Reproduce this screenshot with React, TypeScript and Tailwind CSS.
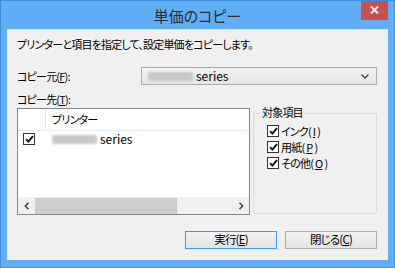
import type { ReactNode } from "react";

const font = {
    fontFamily: '"Noto Sans CJK JP", "Noto Sans", sans-serif',
    fontFeatureSettings: '"palt"',
};

function Check({ checked = true }: { checked?: boolean }) {
    return (
        <span className="inline-flex h-[12px] w-[12px] shrink-0 items-center justify-center border border-[#333333] bg-white">
            {checked && (
                <svg width="9" height="8" viewBox="0 0 9 8">
                    <path d="M1 4.2 L3.4 6.6 L8 1.2" fill="none" stroke="#111" strokeWidth="1.9" />
                </svg>
            )}
        </span>
    );
}

function Btn({ children, def }: { children: ReactNode; def?: boolean }) {
    return (
        <button
            className={
                "flex h-[18px] w-[92px] items-center justify-center border bg-gradient-to-b from-[#f2f2f2] to-[#e3e3e3] text-[11.5px] leading-none text-black " +
                (def ? "border-[#3c9bf0]" : "border-[#acacac]")
            }
        >
            {children}
        </button>
    );
}

function Blur({ w }: { w: number }) {
    return (
        <span
            className="inline-block h-[9px] rounded-[2px] bg-[#c8c8c8] blur-[1.2px]"
            style={{ width: w }}
        />
    );
}

export default function App() {
    return (
        <div className="h-[268px] w-[395px] overflow-hidden border border-[#3f8fde] bg-[#62aef5]" style={font}>
            {/* title bar */}
            <div className="relative flex h-[28px] items-center justify-center">
                <span className="text-[15px] leading-none text-[#2b2b2b]">単価のコピー</span>
                <div className="absolute right-[6px] top-[-1px] flex h-[20px] w-[27px] items-center justify-center bg-[#c75050]">
                    <svg width="9" height="8" viewBox="0 0 9 8">
                        <path d="M1 0.5 L8 7.5 M8 0.5 L1 7.5" stroke="#fff" strokeWidth="1.8" />
                    </svg>
                </div>
            </div>

            {/* client area */}
            <div className="mx-[6px] h-[231px] border-t border-[#d9e6f2] bg-[#f0f0f0] px-[10px] text-[11px] leading-none tracking-[-0.8px] text-black">
                <div className="pt-[9px]">プリンターと項目を指定して、設定単価をコピーします。</div>

                <div className="mt-[17px] flex items-center">
                    <div className="w-[124px]">
                        コピー元(<u>F</u>):
                    </div>
                    <div className="flex h-[18px] w-[236px] items-center border border-[#acacac] bg-gradient-to-b from-[#f2f2f2] to-[#e5e5e5] pl-[6px] pr-[7px]">
                        <Blur w={45} />
                        <span className="ml-[3px] text-[12px] tracking-normal">series</span>
                        <svg className="ml-auto" width="8" height="5" viewBox="0 0 8 5">
                            <path d="M0.5 0.5 L4 4 L7.5 0.5" fill="none" stroke="#444" strokeWidth="1.4" />
                        </svg>
                    </div>
                </div>

                <div className="mt-[9px]">
                    コピー先(<u>T</u>):
                </div>

                <div className="mt-[3px] flex items-start">
                    {/* list view */}
                    <div className="flex h-[107px] w-[233px] flex-col border border-[#828790] bg-white">
                        <div className="flex h-[22px] shrink-0 border-b border-[#e3ecf6]">
                            <div className="w-[28px] border-r border-[#e5e5e5]" />
                            <div className="flex items-center pl-[6px]">プリンター</div>
                        </div>
                        <div className="flex h-[16px] items-center">
                            <div className="w-[34px] pl-[5px]">
                                <Check />
                            </div>
                            <Blur w={45} />
                            <span className="ml-[3px] text-[12px] tracking-normal">series</span>
                        </div>
                        <div className="flex-1" />
                        <div className="flex h-[17px] shrink-0 items-center bg-[#f0f0f0]">
                            <div className="flex w-[17px] items-center justify-center">
                                <svg width="6" height="8" viewBox="0 0 6 8">
                                    <path d="M4.5 0.8 L1.3 4 L4.5 7.2" fill="none" stroke="#444" strokeWidth="1.6" />
                                </svg>
                            </div>
                            <div className="h-[16px] w-[142px] bg-[#cdcdcd]" />
                            <div className="ml-auto flex w-[17px] items-center justify-center">
                                <svg width="6" height="8" viewBox="0 0 6 8">
                                    <path d="M1.5 0.8 L4.7 4 L1.5 7.2" fill="none" stroke="#444" strokeWidth="1.6" />
                                </svg>
                            </div>
                        </div>
                    </div>

                    {/* group box */}
                    <div className="relative ml-[3px] mt-[5px] h-[101px] w-[124px] rounded-[2px] border border-[#dcdcdc]">
                        <span className="absolute left-[7px] top-[-7px] bg-[#f0f0f0] px-[1px]">対象項目</span>
                        <div className="flex flex-col gap-[4px] pl-[13px] pt-[11px]">
                            <label className="flex h-[12px] items-center gap-[2px]">
                                <Check />
                                インク(<u>I</u>)
                            </label>
                            <label className="flex h-[12px] items-center gap-[2px]">
                                <Check />
                                用紙(<u>P</u>)
                            </label>
                            <label className="flex h-[12px] items-center gap-[2px]">
                                <Check />
                                その他(<u>O</u>)
                            </label>
                        </div>
                    </div>
                </div>

                <div className="mt-[16px] flex justify-end gap-[8px] pr-[1px]">
                    <Btn def>
                        実行(<u>E</u>)
                    </Btn>
                    <Btn>
                        閉じる(<u>C</u>)
                    </Btn>
                </div>
            </div>
        </div>
    );
}
